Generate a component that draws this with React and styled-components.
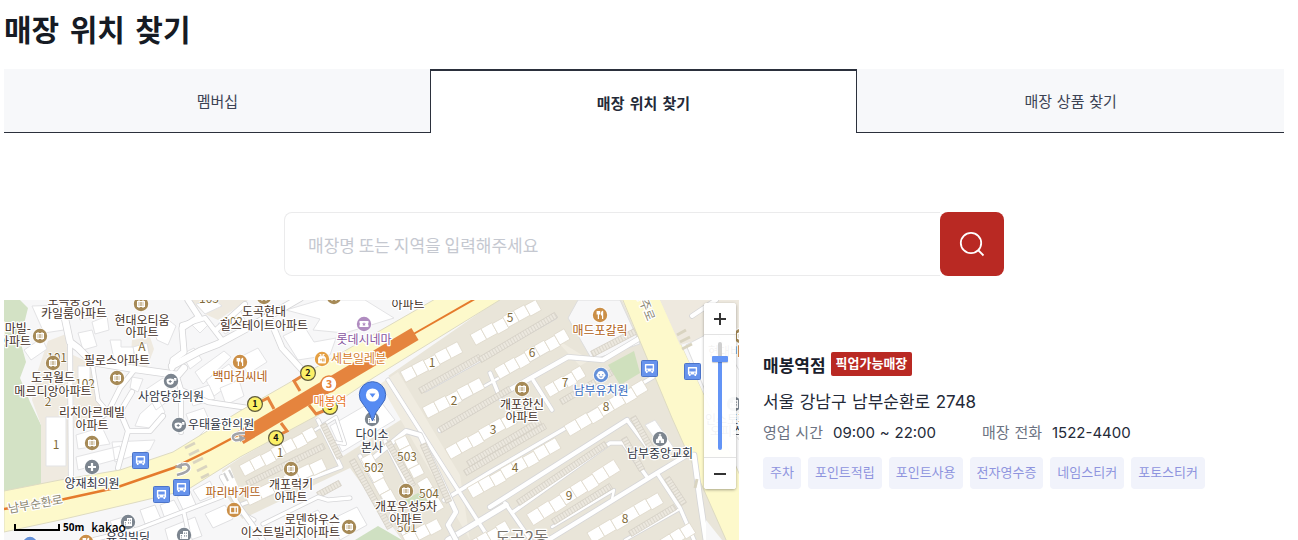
import React, { useState } from "react";
import styled, { createGlobalStyle, css } from "styled-components";

const GlobalStyle = createGlobalStyle`
  *, *::before, *::after { box-sizing: border-box; }
  body {
    margin: 0;
    background: #fff;
    color: #1a202b;
    font-family: "DejaVu Sans", "Noto Sans CJK KR", sans-serif;
  }
  button, input { font: inherit; }
`;

const Page = styled.main`
  display: flex;
  flex-direction: column;
  min-height: 100vh;
  padding: 0 14px 0 4px;
`;

const Title = styled.h1`
  margin: 0;
  padding: 9px 0 16px;
  font-size: 30px;
  line-height: 44px;
  font-weight: 700;
  color: #161b24;
`;

const TabList = styled.nav`
  display: grid;
  grid-template-columns: repeat(3, 1fr);
`;

const Tab = styled.a`
  display: flex;
  align-items: center;
  justify-content: center;
  height: 64px;
  padding-top: 3px;
  font-size: 15px;
  line-height: 24px;
  text-decoration: none;
  color: #3c4354;
  background: #f7f8fa;
  border-bottom: 1px solid #2b303c;
  ${(p) =>
    p.$active &&
    css`
      margin-left: -1px;
      color: #242a38;
      font-weight: 700;
      background: #fff;
      border: 1px solid #2b303c;
      border-top-width: 2px;
      border-bottom: 0;
    `}
`;

const SearchForm = styled.form`
  display: flex;
  width: 100%;
  max-width: 720px;
  margin: 79px auto 24px;
`;

const SearchInput = styled.input`
  flex: 1;
  min-width: 0;
  height: 64px;
  padding: 0 23px;
  border: 1px solid #ebebec;
  border-right: 0;
  border-radius: 8px 0 0 8px;
  outline: 0;
  font-family: "Noto Sans CJK KR", sans-serif;
  font-size: 17px;
  color: #242a38;
  &::placeholder { color: #c5c8d0; opacity: 1; }
`;

const SearchButton = styled.button`
  display: grid;
  place-items: center;
  width: 64px;
  height: 64px;
  padding: 0;
  border: 0;
  border-radius: 8px;
  background: #b92923;
  cursor: pointer;
`;

const Content = styled.div`
  display: grid;
  flex: 1;
  grid-template-columns: minmax(0, 735fr) minmax(0, 545fr);
`;

const MapPanel = styled.section`
  position: relative;
  overflow: hidden;
  min-height: 240px;
  background: #f8f8f9;
`;

const MapCanvas = styled.svg`
  display: block;
  width: 100%;
  height: 100%;
  font-family: "Noto Sans CJK KR", sans-serif;
`;

const ZoomControl = styled.div`
  position: absolute;
  top: 3px;
  right: 3px;
  display: flex;
  flex-direction: column;
  align-items: center;
  width: 32px;
  border-radius: 3px;
  background: rgba(255, 255, 255, 0.94);
  box-shadow: 0 1px 3px rgba(0, 0, 0, 0.35);
`;

const ZoomButton = styled.button`
  display: grid;
  place-items: center;
  width: 32px;
  height: 31px;
  padding: 0;
  border: 0;
  border-radius: 3px;
  background: #fff;
`;

const ZoomTrack = styled.div`
  display: flex;
  justify-content: center;
  width: 32px;
  height: 124px;
  padding: 7px 0;
  border: solid #e3e3e3;
  border-width: 1px 0;
`;

const ZoomRange = styled.input`
  width: 16px;
  height: 108px;
  margin: 0;
  appearance: none;
  background: transparent;
  writing-mode: vertical-lr;
  direction: rtl;
  &::-webkit-slider-runnable-track {
    width: 4px;
    height: 108px;
    border-radius: 2px;
    background: linear-gradient(#cfcfcf 0 17px, #6394f6 17px);
  }
  &::-webkit-slider-thumb {
    appearance: none;
    width: 16px;
    height: 6px;
    margin-left: -6px;
    border-radius: 1px;
    background: #6394f6;
    box-shadow: 0 1px 1px rgba(0, 0, 0, 0.2);
  }
`;

const MapCredit = styled.div`
  position: absolute;
  left: 10px;
  bottom: 4px;
  display: flex;
  align-items: center;
  gap: 3px;
  color: #000;
`;

const ScaleBar = styled.span`
  width: 46px;
  height: 7px;
  border: solid #000;
  border-width: 0 2px 2px;
`;

const ScaleText = styled.span`
  font: 700 10px/18px "Open Sans", sans-serif;
`;

const Provider = styled.span`
  margin-left: 4px;
  font: 500 12px/18px "Noto Sans CJK KR", sans-serif;
`;

const Details = styled.article`
  padding: 52px 0 0 24px;
`;

const NameRow = styled.div`
  display: flex;
  align-items: center;
  gap: 5px;
  height: 24px;
`;

const StoreName = styled.h2`
  margin: 0;
  padding-top: 3px;
  font-size: 17px;
  line-height: 24px;
  font-weight: 700;
`;

const Badge = styled.span`
  padding: 0 5px;
  border-radius: 2px;
  background: #b92923;
  color: #fff;
  font-size: 13px;
  line-height: 24px;
  font-weight: 700;
`;

const Address = styled.p`
  margin: 13px 0 0;
  font-size: 17px;
  line-height: 26px;
  color: #242a38;
`;

const Num = styled.span`
  font-family: Inter, "DejaVu Sans", sans-serif;
`;

const Facts = styled.dl`
  display: flex;
  gap: 46px;
  margin: 6px 0 0;
  font-size: 15px;
  line-height: 24px;
`;

const Fact = styled.div`
  display: flex;
  gap: 10px;
`;

const FactLabel = styled.dt`
  color: #6c7382;
`;

const FactValue = styled.dd`
  margin: 0;
  color: #242a38;
`;

const TagList = styled.ul`
  display: flex;
  flex-wrap: wrap;
  gap: 7px;
  margin: 12px 0 0;
  padding: 0;
  list-style: none;
`;

const Tag = styled.li`
  padding: 0 7px;
  border-radius: 4px;
  background: #f1f3fb;
  color: #8e94de;
  font-size: 13px;
  line-height: 32px;
`;

/* ---------- map drawing ---------- */

function Road({ d, w = 5 }) {
  return (
    <g fill="none" strokeLinejoin="round" strokeLinecap="round">
      <path d={d} stroke="#d5d5d6" strokeWidth={w + 1.6} />
      <path d={d} stroke="#fff" strokeWidth={w} />
    </g>
  );
}

function RoadNet({ roads }) {
  return (
    <g fill="none" strokeLinejoin="round" strokeLinecap="round">
      {roads.map(([d, w], i) => <path key={i} d={d} stroke="#d6d6d8" strokeWidth={w + 2} />)}
      {roads.map(([d, w], i) => <path key={i} d={d} stroke="#fff" strokeWidth={w + 0.4} />)}
    </g>
  );
}

function Row({ a, b, n, h = 12 }) {
  const dx = b[0] - a[0];
  const dy = b[1] - a[1];
  const len = Math.hypot(dx, dy);
  const ang = (Math.atan2(dy, dx) * 180) / Math.PI;
  const w = len / n;
  return (
    <g transform={`translate(${a[0]} ${a[1]}) rotate(${ang})`} fill="#fff" stroke="#e0dacd" strokeWidth=".8">
      {Array.from({ length: n }, (_, i) => (
        <rect key={i} x={i * w} y={-h / 2 + (i % 3 === 2 ? 1 : 0)} width={w} height={h} />
      ))}
    </g>
  );
}

function Parking({ a, b, h = 6 }) {
  const dx = b[0] - a[0];
  const dy = b[1] - a[1];
  const len = Math.hypot(dx, dy);
  const ang = (Math.atan2(dy, dx) * 180) / Math.PI;
  return (
    <g transform={`translate(${a[0]} ${a[1]}) rotate(${ang})`}>
      <rect y={-h / 2} width={len} height={h} fill="url(#bays)" stroke="#d3cec4" strokeWidth=".7" />
    </g>
  );
}

const ICONS = {
  apt: (
    <g>
      <path d="M-3.500-2.500h7v5h-7z" fill="#fff" opacity=".45" />
      <path d="M-2-4v8M2-4v8M-4-2.500h8M-4 2.500h8M-3.500-3v6M3.500-3v6" stroke="#fff" strokeWidth="1" fill="none" />
    </g>
  ),
  food: <path d="M-2.8-4v3h2.4v-3M-1.6-4v8M2.6-4v8M2.6-4q-1.8 2-1 4h1" stroke="#fff" strokeWidth="1.2" fill="none" />,
  clinic: (
    <g>
      <path d="M-4.500-.5q0-2 3.800-2T3-.5q0 4.200-3.700 4.200T-4.500-.5z" fill="#fff" />
      <path d="M2.500-.8h2.300v-1.500H3" stroke="#fff" strokeWidth="1.200" fill="none" />
      <path d="M-.8-1v3M-2.300.5h3" stroke="#7c858f" />
    </g>
  ),
  plus: <path d="M0-4v8M-4 0h8" stroke="#fff" strokeWidth="2.2" />,
  building: (
    <g fill="#fff">
      <path d="M-4 4v-5h3v-3h5v8z" />
      <path d="M-2.6 0v1.4M-2.6 2.4v1M.5-2.5v1.4M2.4-2.5v1.4M.5.2v1.4M2.4.2v1.4" stroke="#7c858f" strokeWidth=".9" />
    </g>
  ),
  church: (
    <g>
      <path d="M-4 4v-3.500l2-1.200v-1.500L0-3.500l2 1.300v1.500l2 1.200V4z" fill="#fff" />
      <path d="M0-5.200v2.500M-1.200-4.200h2.400" stroke="#fff" strokeWidth=".9" />
      <path d="M0 1.500V4" stroke="#7c858f" strokeWidth="1.400" />
    </g>
  ),
  child: (
    <g>
      <path d="M0-4a3.8 3.8 0 0 1 3.8 3A1.3 1.3 0 0 1 3.8 1.4 4 4 0 0 1-3.8 1.4 1.3 1.3 0 0 1-3.8-1 3.8 3.8 0 0 1 0-4z" fill="#fff" />
      <path d="M-1.7-.7v1M1.7-.7v1" stroke="#5b82cb" strokeWidth="1.2" />
      <path d="M-1.5 1.7q1.5 1 3 0" stroke="#5b82cb" fill="none" />
    </g>
  ),
  cinema: (
    <g>
      <path d="M-4.5-3h9v2q-1.4 1 0 2v2h-9V1q1.4-1 0-2z" fill="#fff" />
      <path d="M0-2l.6 1.4 1.5.1-1.2 1 .4 1.5L0 1.2-1.3 2l.4-1.5-1.2-1 1.5-.1z" fill="#b08cc0" />
    </g>
  ),
  shop: (
    <g>
      <path d="M-3.5 4v-5l1-1.5h5l1 1.5v5zM-2.5-4.5h1.6v2M2.5-4.5H.9v2" fill="#fff" stroke="#fff" strokeWidth=".8" />
      <path d="M-2 .8h1.6M.7-.5v3M2-.5v3" stroke="#e5a043" />
    </g>
  ),
  bread: <path d="M-3.6-3h7.2v6h-7.2zM1-3v6" stroke="#fff" strokeWidth="1.4" fill="none" />,
};

const TONES = {
  apt: "#a68a57", food: "#cb8f47", clinic: "#7c858f", plus: "#7c858f", building: "#7c858f",
  church: "#7c858f", child: "#6490d8", cinema: "#b08cc0", shop: "#e5a043", bread: "#cb8f47",
};

function Poi({ x, y, kind }) {
  return (
    <g transform={`translate(${x} ${y})`}>
      <circle r="8" fill="#fff" opacity=".75" />
      <circle r="7.2" fill={TONES[kind]} />
      {ICONS[kind]}
    </g>
  );
}

function Bus({ x, y }) {
  return (
    <g transform={`translate(${x} ${y})`}>
      <rect x="-8" y="-8" width="16" height="16" rx="1" fill="#6793ec" stroke="#4c74c9" />
      <path d="M-4-4.5h8q.6 0 .6.6V3h-1v1.6H2V3h-4v1.6h-1.6V3h-1v-6.9q0-.6.6-.6z" fill="#fff" />
      <path d="M-3.2-3h6.400v3h-6.400z" fill="#6793ec" />
      <path d="M-3 1.700h1.400M1.600 1.700H3" stroke="#6793ec" />
    </g>
  );
}

function Exit({ x, y, n }) {
  return (
    <g>
      <circle cx={x} cy={y} r="7.4" fill="#fbf066" stroke="#5f5a3c" strokeWidth="1.2" />
      <text x={x} y={y + 3} textAnchor="middle" fontSize="9" fontWeight="700" fill="#111">{n}</text>
    </g>
  );
}

const BROWN = "#42301f";
const ORANGE = "#b05e14";
const SLATE = "#30353f";

function Label({ x, y, children, fill = BROWN, size = 12, anchor = "middle", ...rest }) {
  return (
    <text x={x} y={y} textAnchor={anchor} fontSize={size} fill={fill} stroke="#fff" strokeWidth="2.5"
      strokeLinejoin="round" paintOrder="stroke" {...rest}>
      {children}
    </text>
  );
}

const BLOCK_NUMBERS = [
  [510, 322, "5"], [532, 357, "6"], [565, 387, "7"], [606, 411, "8"], [432, 367, "1"], [454, 405, "2"],
  [493, 434, "3"], [515, 472, "4"], [569, 500, "9"], [625, 523, "8"], [407, 461, "503"], [374, 472, "502"],
  [429, 498, "504"], [407, 532, "501"], [280, 457, "1"], [56, 449, "1"], [48, 406, "2"], [142, 351, "A"],
  [57, 362, "101"], [85, 388, "102"], [233, 326, "102"], [209, 303, "103"],
];

const WEST_ROADS = [
  ["M61 300L70 342 78 348 92 362 135 369 178 375 184 368", 6],
  ["M135 369L120 388 108 412 94 422", 4],
  ["M70 345L71 480", 4],
  ["M92 362L98 400", 3],
  ["M188 300L199 317 182 328 184 352 173 360 172 368", 5],
  ["M172 366L200 351 218 344 262 320 300 298", 6],
  ["M182 325L205 318 222 340", 4],
  ["M216 330L245 304", 4],
  ["M176 374L181 390 208 402 262 410", 4],
  ["M181 390L181 432", 4],
  ["M262 300L282 348 304 372", 5],
  ["M132 392L120 412 128 431 118 468", 4],
  ["M128 431L150 431 163 416", 4],
  ["M98 400L108 412", 3],
];

const EAST_ROADS = [
  ["M388 380L444 468 490 540", 3],
  ["M490 507L627 420", 4],
  ["M444 500L490 472 600 408 660 373", 3],
  ["M440 430L490 401 568 357 603 360 640 338", 4],
  ["M533 380L552 410", 3],
  ["M490 373L500 398", 3],
  ["M460 400L555 346", 2],
  ["M425 390L490 354 555 317", 3],
  ["M513 512L610 443 623 443 647 477", 3],
  ["M627 420L648 448", 3],
  ["M545 542L657 473 692 452", 4],
  ["M657 473L680 508 694 540", 3],
  ["M505 503L532 542", 3],
  ["M552 527L614 490 612 499", 2],
  ["M625 540L678 510", 2],
  ["M448 540L506 505", 5],
];

function StreetMap() {
  return (
    <MapCanvas viewBox="4 300 735 240" preserveAspectRatio="xMinYMin slice" role="img" aria-label="매봉역점 지도">
      <defs>
        <pattern id="bays" width="3" height="6" patternUnits="userSpaceOnUse">
          <rect width="3" height="6" fill="#ece8df" />
          <path d="M.5 0v6" stroke="#d3cec4" strokeWidth=".7" />
        </pattern>
      </defs>
      <rect x="4" y="300" width="735" height="240" fill="#f7f7f8" />

      <path d="M4 300H20L28 308 20 340 26 362 20 378 30 402 41 425V485L4 492z" fill="#d3e2c5" />
      <path d="M48 341L66 334 70 390V480L41 484V425L32 400 38 370z" fill="#efeae0" />
      <path d="M73 355L90 363 97 398 108 413 98 430 74 428z" fill="#efeae0" />
      <path d="M132 340L150 337 154 349 146 370 130 367z" fill="#efeae0" />
      <path d="M190 300H248L218 320 205 314z" fill="#efeae0" />

      <g fill="#fff" stroke="#e3e3e5">
        <path d="M32 306L62 305 64 330 44 333zM78 333L92 330 97 346 83 350zM92 322L107 316 109 330 95 334zM77 308L88 303 92 317 80 320z" />
        <path d="M24 350L42 338 47 349 31 360zM110 340H121V347H134V368L115 364zM46 417H66V466H46zM78 366H90V395H78z" />
        <path d="M76 435L102 427 110 444 78 449zM76 457L120 446 122 458 78 470zM112 442L155 440 150 450 115 462z" />
        <path d="M153 328L166 318 176 326 168 345 157 340zM133 347L147 343 150 358 136 362z" />
        <path d="M190 323L200 315 208 325 200 333zM196 304L215 300 222 306 205 314zM218 324L240 310 246 322 225 334z" />
        <path d="M195 372L224 351 231 357 203 384zM206 380L229 364 239 378 214 396zM182 354L194 348 202 360 190 369z" />
        <path d="M238 358L258 348 267 362 248 374zM220 388L239 380 244 396 226 405zM188 392L209 385 215 399 193 406z" />
        <path d="M283 336L304 326 314 342 336 338 330 355 298 360zM286 310L320 300H365L394 318 345 333 313 330 320 319z" />
        <path d="M145 390L163 378 172 398 156 410zM140 414L158 398 165 412 150 428 135 426zM132 377L143 379 138 392 130 388z" />
        <path d="M195 440L210 425 216 430 204 442zM186 414L204 408 209 420 190 425z" />
      </g>
      <RoadNet roads={WEST_ROADS} />

      <path d="M498 300H622L727 540H425L318 416 388 376z" fill="#e9e5d9" />
      <path d="M240 458L318 414 428 540H398L350 472 243 520 228 498 222 470z" fill="#e9e5d9" />
      <path d="M578 300H620L640 344 592 360 568 318z" fill="#f7f7f8" stroke="#ddd" />
      <path d="M315 418L388 375 410 414 340 458z" fill="#f7f7f8" />
      <path d="M330 426L378 398 395 420 342 452z" fill="#fff" stroke="#e2e2e4" />
      <path d="M240 520L350 468 402 540H240z" fill="#f7f7f8" />
      <path d="M355 540L378 526 402 540z" fill="#cfe0c2" />
      <path d="M608 365L634 351 640 373 620 385z" fill="#cfe0bd" />
      <path d="M405 500L418 493 430 500 415 510z" fill="#cfe0bd" />
      <path d="M553 337L569 347 590 360 580 366zM380 384L398 372 460 475 470 540z" fill="#f0ece1" />

      <RoadNet roads={EAST_ROADS} />
      <RoadNet roads={[
        ["M318 420L341 467 232 508 254 520", 3],
        ["M365 465L406 431 420 435 456 512 448 525 456 540", 4],
        ["M360 456L410 545", 3],
        ["M385 441L410 490", 3],
        ["M315 430L336 417 345 444 328 441", 2],
      ]} />

      <Row a={[403, 377]} b={[460, 347]} n={5} />
      <Row a={[473, 340]} b={[538, 304]} n={6} />
      <Row a={[497, 374]} b={[567, 334]} n={7} />
      <Row a={[425, 413]} b={[482, 383]} n={5} />
      <Row a={[547, 392]} b={[583, 371]} n={4} />
      <Row a={[567, 431]} b={[645, 385]} n={7} />
      <Row a={[448, 454]} b={[514, 417]} n={6} />
      <Row a={[470, 493]} b={[558, 443]} n={8} />
      <Row a={[530, 520]} b={[617, 465]} n={8} h={13} />
      <Row a={[590, 538]} b={[660, 497]} n={6} />
      <Row a={[663, 545]} b={[692, 527]} n={3} />
      <Row a={[470, 548]} b={[508, 526]} n={4} />
      <Row a={[242, 471]} b={[315, 432]} n={7} />
      <Row a={[247, 500]} b={[324, 463]} n={6} />
      <Row a={[366, 456]} b={[392, 504]} n={4} />
      <Row a={[400, 438]} b={[419, 476]} n={4} />
      <Row a={[422, 480]} b={[440, 510]} n={3} />
      <Row a={[405, 541]} b={[439, 523]} n={3} />

      <Parking a={[420, 391]} b={[480, 357]} />
      <Parking a={[480, 360]} b={[556, 315]} />
      <Parking a={[440, 430]} b={[510, 389]} />
      <Parking a={[465, 473]} b={[545, 426]} />
      <Parking a={[468, 464]} b={[540, 421]} />
      <Parking a={[518, 503]} b={[606, 444]} />
      <Parking a={[553, 522]} b={[611, 486]} />
      <Parking a={[561, 402]} b={[612, 372]} />
      <Parking a={[592, 354]} b={[636, 331]} />
      <Parking a={[624, 438]} b={[642, 470]} />
      <Parking a={[633, 417]} b={[652, 450]} />
      <Parking a={[667, 478]} b={[684, 504]} />
      <Parking a={[630, 534]} b={[675, 507]} />
      <Parking a={[352, 460]} b={[390, 528]} />
      <Parking a={[388, 442]} b={[413, 486]} />
      <Parking a={[423, 444]} b={[449, 502]} />
      <Parking a={[247, 484]} b={[324, 446]} />
      <Parking a={[323, 424]} b={[340, 458]} />
      <Parking a={[318, 495]} b={[340, 483]} />

      <g fill="#fff" stroke="#e0e0e2">
        <path d="M140 510L155 505 161 519 145 524zM160 505L174 500 181 513 165 519zM177 497L190 491 197 507 184 512zM193 490L210 481 216 494 200 501z" />
        <path d="M110 521L130 515 135 529 116 535zM205 514L225 505 233 519 213 528zM165 529L195 517 202 536 170 547zM330 520L357 507 367 525 340 540zM285 525L318 510 328 525 300 540z" />
        <path d="M645 425L655 420 674 448 665 453z" />
      </g>
      <RoadNet roads={[
        ["M92 540L138 529 242 489", 3],
        ["M190 540L184 513", 3],
        ["M222 477L240 508 263 540", 4],
        ["M263 524L318 497 328 500 350 498", 3],
      ]} />

      {/* boulevards */}
      <path d="M4 491L60 480 120 470 173 452 240 411 437 298H503L373 378 318 415 240 457 187 490 133 503 60 520 4 532z" fill="#fdf9cb" stroke="#dedbc2" />
      <path d="M622 298L672 418 727 542H742V480L703 392 660 298z" fill="#fdf9cb" stroke="#dedbc2" />
      <path d="M660 298H742V470L703 392z" fill="#f7f7f8" />
      <path d="M660 300H739V328L680 345z" fill="#eee9df" />
      <path d="M686 345L715 330 739 370V440L707 395z" fill="#fff" stroke="#dedede" />
      <Road d="M692 316L716 300" w={4} />
      <Road d="M694 455L700 500 706 540" w={5} />
      <path d="M706 520L722 540H706z" fill="#f7f7f8" />
      <g stroke="#d9d4c0" strokeWidth="3">
        <path d="M185 448l10-5M189 455l10-5M193 463l10-5M197 471l10-5M201 478l8-4M677 335l9-5M680 342l10-5M682 349l10-5M697 479l-2 9" />
      </g>
      <path d="M222 473L230 467 238 487 230 490z" fill="#fff" />
      <g stroke="#cfcfcf" strokeWidth="2"><path d="M224 473l4 8M229 470l4 8" /></g>

      <path d="M4 509L60 500 115 488 173 468 210 450 240 434" fill="none" stroke="#e57b2c" strokeWidth="2.5" />
      <path d="M410 336L480 296" stroke="#e57b2c" strokeWidth="2" />
      <path d="M240 438L415 334" stroke="#e5843e" strokeWidth="14" />
      <path d="M300 391l-6-10 8-5M274 409l-6-11-8 4M281 423l6 8-8 4M309 405l7 9 10-4" fill="none" stroke="#e5843e" strokeWidth="3" />
      <g fill="none" stroke="#fff" strokeWidth="4.5">
        <path d="M177 475q13-3 12-8-2-5-12-1M245 433q-13 0-12 5 1 4 11 0" />
      </g>
      <g fill="none" stroke="#a3a4a8" strokeWidth="2.5">
        <path d="M177 475q13-3 12-8-2-5-10-1M245 433q-13 0-12 5 1 4 8 1" />
      </g>
      <path d="M174 467l8-4v6zM246 438l-7-3 1 7z" fill="#a3a4a8" />

      <g fontSize="12" textAnchor="middle" fill="#7f6a3a" stroke="#fff" strokeWidth="1.5" paintOrder="stroke">
        {BLOCK_NUMBERS.map(([x, y, t], i) => <text key={i} x={x} y={y}>{t}</text>)}
      </g>

      <Poi x={141} y={304} kind="apt" />
      <Poi x={40} y={336} kind="apt" />
      <Poi x={53} y={363} kind="apt" />
      <Poi x={117} y={378} kind="apt" />
      <Poi x={92} y={443} kind="apt" />
      <Poi x={264} y={297} kind="apt" />
      <Poi x={334} y={297} kind="apt" />
      <Poi x={291} y={469} kind="apt" />
      <Poi x={406} y={491} kind="apt" />
      <Poi x={349} y={527} kind="apt" />
      <Poi x={522} y={389} kind="apt" />
      <Poi x={741} y={336} kind="apt" />
      <Poi x={240} y={362} kind="food" />
      <Poi x={600} y={315} kind="food" />
      <Poi x={86} y={542} kind="food" />
      <Poi x={171} y={381} kind="clinic" />
      <Poi x={179} y={425} kind="clinic" />
      <Poi x={92} y={467} kind="plus" />
      <Poi x={128} y={522} kind="building" />
      <Poi x={184} y={535} kind="building" />
      <Poi x={372} y={419} kind="building" />
      <Poi x={734} y={404} kind="building" />
      <Poi x={30} y={544} kind="child" />
      <Poi x={601} y={375} kind="child" />
      <Poi x={660} y={439} kind="church" />
      <Poi x={364} y={324} kind="cinema" />
      <Poi x={322} y={359} kind="shop" />
      <Poi x={234} y={510} kind="bread" />

      <Label x={75} y={305}>도곡중앙지</Label>
      <Label x={74} y={318}>카일룸아파트</Label>
      <Label x={142} y={325}>현대오티움</Label>
      <Label x={142} y={337}>아파트</Label>
      <Label x={31} y={333} anchor="end">현마빌-</Label>
      <Label x={31} y={346} anchor="end">아파트</Label>
      <Label x={117} y={365}>필로스아파트</Label>
      <Label x={53} y={382}>도곡월드</Label>
      <Label x={53} y={396}>메르디앙아파트</Label>
      <Label x={92} y={417}>리치아르떼빌</Label>
      <Label x={92} y={430}>아파트</Label>
      <Label x={264} y={316}>도곡현대</Label>
      <Label x={264} y={330}>힐스테이트아파트</Label>
      <Label x={408} y={309}>아파트</Label>
      <Label x={171} y={401} fill={SLATE}>사암당한의원</Label>
      <Label x={188} y={429} fill={SLATE} anchor="start">우태율한의원</Label>
      <Label x={92} y={488} fill={SLATE}>양재최의원</Label>
      <Label x={240} y={381} fill={ORANGE}>백마김씨네</Label>
      <Label x={600} y={335} fill={ORANGE}>매드포갈릭</Label>
      <Label x={233} y={497} fill={ORANGE}>파리바게뜨</Label>
      <Label x={364} y={344} fill="#8856a0">롯데시네마</Label>
      <Label x={331} y={363} fill="#d5802b" anchor="start">세븐일레븐</Label>
      <Label x={601} y={395} fill="#3769bd">남부유치원</Label>
      <Label x={522} y={409}>개포한신</Label>
      <Label x={522} y={422}>아파트</Label>
      <Label x={291} y={489}>개포럭키</Label>
      <Label x={291} y={502}>아파트</Label>
      <Label x={406} y={511}>개포우성5차</Label>
      <Label x={406} y={524}>아파트</Label>
      <Label x={340} y={524} anchor="end">로덴하우스</Label>
      <Label x={340} y={537} anchor="end">이스트빌리지아파트</Label>
      <Label x={660} y={458} fill={SLATE}>남부중앙교회</Label>
      <Label x={372} y={439} fill={SLATE}>다이소</Label>
      <Label x={372} y={452} fill={SLATE}>본사</Label>
      <Label x={128} y={542} fill={SLATE}>유일빌딩</Label>
      <Label x={522} y={543} fill="#77736c" size={16}>도곡2동</Label>
      <Label x={708} y={356} anchor="start">현대비젼</Label>
      <Label x={705} y={424} fill={SLATE} anchor="start">인스토피</Label>
      <Label x={710} y={436} fill={SLATE} anchor="start">오피스</Label>
      <Label x={9} y={513} fill="#8c8872" anchor="start" transform="rotate(-10 9 513)">남부순환로</Label>
      <Label x={635} y={291} fill="#8c8872" anchor="start" transform="rotate(68 635 291)">언주로</Label>

      <Bus x={140.5} y={460.5} />
      <Bus x={161.5} y={494.5} />
      <Bus x={181.5} y={487.5} />
      <Bus x={649.5} y={368.5} />
      <Bus x={692.5} y={371.5} />

      <Exit x={330} y={407} n="3" />
      <Label x={330} y={406} fill="#e87523">매봉역</Label>
      <circle cx="329" cy="384" r="8" fill="#fff" stroke="#e5843e" strokeWidth="1.5" />
      <text x="329" y="388" textAnchor="middle" fontSize="11" fontWeight="700" fill="#e5843e">3</text>
      <Exit x={308} y={373} n="2" />
      <Exit x={255} y={404} n="1" />
      <Exit x={276} y={438} n="4" />

      <path d="M372.5 421Q370 412 363 404A13.2 13.2 0 1 1 382 404Q375 412 372.5 421z" fill="#568bf2" stroke="#3d68bd" />
      <circle cx="372.5" cy="395" r="6.6" fill="#fff" />
      <path d="M369.5 393.5h6l-3 4z" fill="#568bf2" />
    </MapCanvas>
  );
}

const TABS = ["멤버십", "매장 위치 찾기", "매장 상품 찾기"];
const SERVICES = ["주차", "포인트적립", "포인트사용", "전자영수증", "네임스티커", "포토스티커"];

export default function App() {
  const [keyword, setKeyword] = useState("");
  const [zoom, setZoom] = useState(86);
  return (
    <>
      <GlobalStyle />
      <Page>
        <Title>매장 위치 찾기</Title>
        <TabList>
          {TABS.map((name, i) => (
            <Tab key={name} href="#" $active={i === 1} aria-current={i === 1 ? "page" : undefined}>{name}</Tab>
          ))}
        </TabList>
        <SearchForm onSubmit={(e) => e.preventDefault()}>
          <SearchInput
            aria-label="매장 검색"
            placeholder="매장명 또는 지역을 입력해주세요"
            value={keyword}
            onChange={(e) => setKeyword(e.target.value)}
          />
          <SearchButton aria-label="검색">
            <svg width="28" height="28" viewBox="0 0 28 28" fill="none" stroke="#fff" strokeWidth="1.8">
              <circle cx="13" cy="13" r="10.2" />
              <path d="M20 20l5.500 5.500" />
            </svg>
          </SearchButton>
        </SearchForm>
        <Content>
          <MapPanel>
            <StreetMap />
            <MapCredit>
              <ScaleBar />
              <ScaleText>50m</ScaleText>
              <Provider>kakao</Provider>
            </MapCredit>
            <ZoomControl>
              <ZoomButton aria-label="확대" onClick={() => setZoom(Math.min(100, zoom + 7))}>
                <svg width="12" height="12" stroke="#333" strokeWidth="2"><path d="M6 0v12M0 6h12" /></svg>
              </ZoomButton>
              <ZoomTrack>
                <ZoomRange type="range" aria-label="지도 확대 수준" value={zoom} onChange={(e) => setZoom(+e.target.value)} />
              </ZoomTrack>
              <ZoomButton aria-label="축소" onClick={() => setZoom(Math.max(0, zoom - 7))}>
                <svg width="12" height="12" stroke="#333" strokeWidth="2"><path d="M0 6h12" /></svg>
              </ZoomButton>
            </ZoomControl>
          </MapPanel>
          <Details>
            <NameRow>
              <StoreName>매봉역점</StoreName>
              <Badge>픽업가능매장</Badge>
            </NameRow>
            <Address>서울 강남구 남부순환로 <Num>2748</Num></Address>
            <Facts>
              <Fact>
                <FactLabel>영업 시간</FactLabel>
                <FactValue><Num>09:00</Num> <Num>~</Num> <Num>22:00</Num></FactValue>
              </Fact>
              <Fact>
                <FactLabel>매장 전화</FactLabel>
                <FactValue><Num>1522-4400</Num></FactValue>
              </Fact>
            </Facts>
            <TagList>
              {SERVICES.map((s) => <Tag key={s}>{s}</Tag>)}
            </TagList>
          </Details>
        </Content>
      </Page>
    </>
  );
}
